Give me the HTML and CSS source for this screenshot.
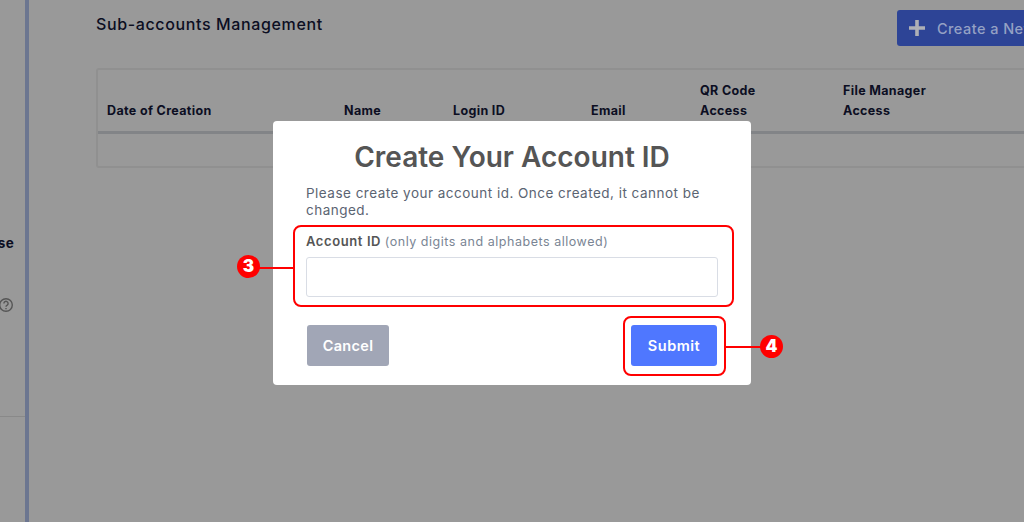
FILE: index.html
```html
<!DOCTYPE html>
<html lang="en">
<head>
<meta charset="utf-8">
<title>Sub-accounts Management</title>
<link rel="stylesheet" href="styles.css">
</head>
<body>
<div class="page">
  <aside class="sidebar">
    <div class="side-label"><span>Enterprise</span></div>
    <div class="side-help">
      <svg width="16" height="16" viewBox="0 0 16 16" fill="none" stroke="#8f8f8f" stroke-width="1.4"><circle cx="8" cy="8" r="6.3"/><path d="M5.9 6.4a2.1 2.1 0 1 1 3.3 1.7c-.8.5-1.2.9-1.2 1.700"/><path d="M8 11v1.200"/></svg>
    </div>
    <div class="side-rule"></div>
  </aside>
  <main class="main">
    <header class="top">
      <h1>Sub-accounts Management</h1>
      <button class="create" type="button">
        <svg width="16" height="16" viewBox="0 0 16 16"><path d="M6.200 0h3.600v6.200H16v3.600H9.800V16H6.200V9.800H0V6.200h6.200z" fill="#aeb0b6"/></svg>
        <span>Create a New Sub-account</span>
      </button>
    </header>
    <section class="table">
      <div class="thead">
        <div>Date of Creation</div>
        <div>Name</div>
        <div>Login ID</div>
        <div>Email</div>
        <div>QR Code<br>Access</div>
        <div>File Manager<br>Access</div>
      </div>
      <div class="tbody"></div>
    </section>
  </main>
</div>

<div class="overlay">
  <div class="modal">
    <h2>Create Your Account ID</h2>
    <p class="intro">Please create your account id. Once created, it cannot be changed.</p>
    <label class="label" for="account-id"><b>Account ID</b> <span>(only digits and alphabets allowed)</span></label>
    <input class="input" id="account-id" type="text">
    <div class="actions">
      <button class="btn cancel" type="button">Cancel</button>
      <button class="btn submit" type="button">Submit</button>
    </div>
  </div>
</div>

<div class="mark box-three"></div>
<div class="mark line-three"></div>
<div class="mark dot dot-three">3</div>
<div class="mark box-four"></div>
<div class="mark line-four"></div>
<div class="mark dot dot-four">4</div>
</body>
</html>
```

FILE: styles.css
```css
* { box-sizing: border-box; }
html, body { margin: 0; height: 100%; overflow: hidden; }
body {
  position: relative;
  background: #fff;
  font-family: "Inter", "Open Sans", sans-serif;
  color: #14183a;
}
.page { display: flex; height: 522px; width: 1024px; overflow: hidden; }

.sidebar {
  flex: 0 0 29px;
  border-right: 4px solid #b5c5f0;
  padding-top: 234px;
  overflow: hidden;
}
.side-label {
  display: flex;
  justify-content: flex-end;
  height: 18px;
  margin-right: 11px;
  font-size: 13.5px;
  font-weight: 700;
  line-height: 18px;
  letter-spacing: .3px;
  color: #14183a;
  white-space: nowrap;
}
.side-help {
  display: flex;
  justify-content: flex-end;
  margin-top: 45px;
  margin-right: 11px;
  margin-left: -6px;
  height: 16px;
}
.side-rule { margin-top: 103px; height: 1px; background: #e4e4e4; }

.main { flex: 0 0 auto; width: 1128px; padding: 10px 0 0 67px; }
.top { display: flex; justify-content: space-between; align-items: flex-start; height: 58px; }
.top h1 {
  margin: 4px 0 0;
  font-size: 16px;
  line-height: 20px;
  font-weight: 500;
  letter-spacing: .63px;
  color: #14183a;
}
.create {
  position: relative;
  z-index: 2;
  display: flex;
  align-items: center;
  gap: 12px;
  width: 260px;
  height: 36px;
  padding: 0 0 0 12px;
  border: 0;
  border-radius: 3px;
  background: #2d4496;
  color: #95a1c4;
  font: 500 14.5px "Inter", sans-serif;
  letter-spacing: .45px;
  white-space: nowrap;
}

.table {
  width: 1000px;
  height: 100px;
  border: 2px solid #f0f0f0;
  border-radius: 3px;
}
.thead {
  display: grid;
  grid-template-columns: 237px 109px 138px 109px 143px 1fr;
  align-items: end;
  height: 64px;
  padding: 0 0 10px 9px;
  border-bottom: 3px solid #d9dde2;
  font-size: 12.5px;
  line-height: 20px;
  font-weight: 700;
  letter-spacing: .35px;
  color: #14183a;
}

.overlay {
  position: absolute;
  inset: 0;
  display: flex;
  justify-content: center;
  align-items: flex-start;
  padding: 121px 0 0;
  background: rgba(0, 0, 0, .4);
}
.modal {
  width: 478px;
  height: 264px;
  padding: 20px 33px 0;
  background: #fff;
  border-radius: 4px;
}
.modal h2 {
  margin: 0;
  height: 32px;
  font-size: 28px;
  line-height: 32px;
  font-weight: 600;
  text-align: center;
  color: #555;
  white-space: nowrap;
}
.intro {
  margin: 12px 0 0;
  font-size: 13.5px;
  line-height: 17px;
  color: #5b6472;
  letter-spacing: .48px;
}
.label {
  display: block;
  margin-top: 12px;
  font-size: 13px;
  line-height: 20px;
  color: #7a8594;
  white-space: nowrap;
}
.label b { color: #555; font-weight: 600; letter-spacing: .6px; }
.label span { font-size: 12.5px; letter-spacing: .53px; }
.input {
  display: block;
  width: 412px;
  height: 40px;
  margin-top: 5px;
  border: 1px solid #d9dde5;
  border-radius: 3px;
  background: #fff;
}
.actions {
  display: flex;
  justify-content: space-between;
  margin: 28px 1px 0 1px;
}
.btn {
  height: 41px;
  border: 0;
  border-radius: 3px;
  color: #fff;
  font: 600 14.5px "Inter", sans-serif;
  letter-spacing: .3px;
}
.cancel { width: 82px; background: #a1a6b6; }
.submit { width: 86px; background: #4f77ff; letter-spacing: .5px; }

.mark { position: absolute; }
.box-three, .box-four {
  border: 2px solid #f00;
  border-radius: 8px;
}
.box-three { left: 293px; top: 225px; width: 441px; height: 82px; }
.box-four { left: 623px; top: 316px; width: 103px; height: 60px; }
.line-three, .line-four { height: 2px; background: #f00; }
.line-three { left: 258px; top: 267px; width: 36px; }
.line-four { left: 725px; top: 346px; width: 36px; }
.dot {
  width: 23px;
  height: 23px;
  border-radius: 50%;
  background: #f00;
  color: #fff;
  font-size: 17px;
  font-weight: 900;
  line-height: 23px;
  text-align: center;
}
.dot-three { left: 237px; top: 255px; }
.dot-four { left: 760px; top: 335px; }
```
